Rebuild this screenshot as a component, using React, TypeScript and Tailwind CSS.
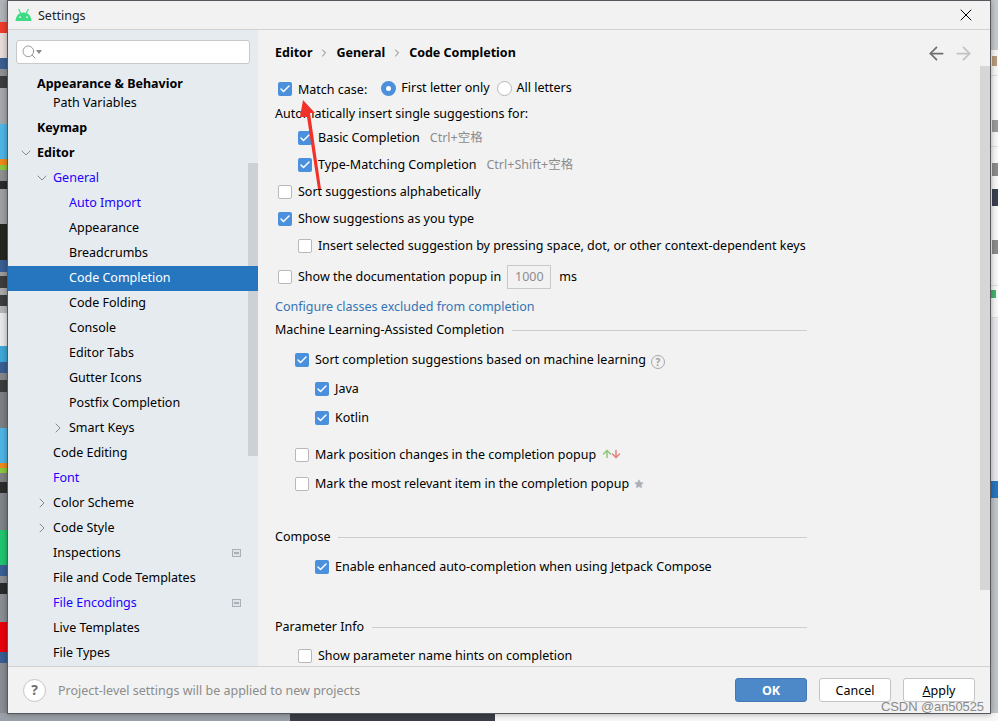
import { Check, ChevronDown, ChevronRight, X, ArrowLeft, ArrowRight, Search, Star, ArrowUp, ArrowDown } from 'lucide-react';
import type { ReactNode } from 'react';

const FONT = "font-['Noto_Sans','Noto_Sans_CJK_SC',sans-serif]";

function Box({ on }: { on?: boolean }) {
  return on ? (
    <span className="flex h-[14px] w-[14px] shrink-0 items-center justify-center rounded-[2px] bg-[#4a90dc]">
      <Check size={12} strokeWidth={3} className="text-white" />
    </span>
  ) : (
    <span className="h-[14px] w-[14px] shrink-0 rounded-[2px] border border-[#b8b8b8] bg-white" />
  );
}

function Check1({ on, x, mt, children }: { on?: boolean; x: string; mt: string; children: ReactNode }) {
  return (
    <div className={`flex h-5 items-center gap-[6px] ${x} ${mt}`}>
      <Box on={on} />
      <span className="whitespace-nowrap">{children}</span>
    </div>
  );
}

function Section({ title, mt }: { title: string; mt: string }) {
  return (
    <div className={`flex h-5 w-[532px] items-center gap-2 ${mt}`}>
      <span className="whitespace-nowrap">{title}</span>
      <span className="h-px flex-1 bg-[#cdcdcd]" />
    </div>
  );
}

type TreeRow = { label: string; pad: string; bold?: boolean; link?: boolean; sel?: boolean; open?: boolean; closed?: boolean; badge?: boolean; h?: string };

const tree: TreeRow[] = [
  { label: 'Appearance & Behavior', pad: 'pl-[29px]', bold: true, h: 'h-[19px]' },
  { label: 'Path Variables', pad: 'pl-[45px]', h: 'h-[19px]' },
  { label: 'Keymap', pad: 'pl-[29px]', bold: true, h: 'mt-[3px] h-[26px]' },
  { label: 'Editor', pad: 'pl-[29px]', bold: true, open: true },
  { label: 'General', pad: 'pl-[45px]', link: true, open: true },
  { label: 'Auto Import', pad: 'pl-[61px]', link: true },
  { label: 'Appearance', pad: 'pl-[61px]' },
  { label: 'Breadcrumbs', pad: 'pl-[61px]' },
  { label: 'Code Completion', pad: 'pl-[61px]', sel: true },
  { label: 'Code Folding', pad: 'pl-[61px]' },
  { label: 'Console', pad: 'pl-[61px]' },
  { label: 'Editor Tabs', pad: 'pl-[61px]' },
  { label: 'Gutter Icons', pad: 'pl-[61px]' },
  { label: 'Postfix Completion', pad: 'pl-[61px]' },
  { label: 'Smart Keys', pad: 'pl-[61px]', closed: true },
  { label: 'Code Editing', pad: 'pl-[45px]' },
  { label: 'Font', pad: 'pl-[45px]', link: true },
  { label: 'Color Scheme', pad: 'pl-[45px]', closed: true },
  { label: 'Code Style', pad: 'pl-[45px]', closed: true },
  { label: 'Inspections', pad: 'pl-[45px]', badge: true },
  { label: 'File and Code Templates', pad: 'pl-[45px]' },
  { label: 'File Encodings', pad: 'pl-[45px]', link: true, badge: true },
  { label: 'Live Templates', pad: 'pl-[45px]' },
  { label: 'File Types', pad: 'pl-[45px]' },
];

function Row({ r }: { r: TreeRow }) {
  const color = r.sel ? 'bg-[#2675bf] text-white' : r.link ? 'text-[#2200ff]' : 'text-black';
  return (
    <div className={`relative flex items-center ${r.h ?? 'h-[25px] pb-[2px]'} ${r.pad} ${color} ${r.bold ? 'font-bold' : ''}`}>
      {(r.open || r.closed) && (
        <span className={`-ml-[19px] mr-[3px] flex w-4 justify-center text-[#8a8a8a]`}>
          {r.open ? <ChevronDown size={16} strokeWidth={1.5} /> : <ChevronRight size={16} strokeWidth={1.5} />}
        </span>
      )}
      <span className="whitespace-nowrap">{r.label}</span>
      {r.badge && (
        <span className="absolute left-[224px] flex h-[8px] w-[9px] items-center justify-center border border-[#a9b0b7] bg-[#dfe3e7]">
          <span className="h-[2px] w-[5px] bg-[#a9b0b7]" />
        </span>
      )}
    </div>
  );
}

// strip of the desktop showing at the left of the dialog
const leftStrip: string[] = [
  'h-[22px] bg-[#b0b3b8]', 'h-[11px] bg-[#ee3b2c]', 'h-[25px] bg-[#e8dcd8]', 'h-[11px] bg-[#3a5f92]',
  'h-[7px] bg-[#8f9195]', 'h-[12px] bg-[#3d3d3d]', 'h-[36px] bg-[#a4a7ab]', 'h-[35px] bg-[#4eb5e6]',
  'h-[6px] bg-[#ef8a1a]', 'h-[5px] bg-[#8cc63f]', 'h-[11px] bg-[#8f8f8f]', 'h-[8px] bg-[#2a2a2a]',
  'h-[35px] bg-[#a0a0a0]', 'h-[36px] bg-[#24261f]', 'h-[12px] bg-[#3a5f92]', 'h-[4px] bg-[#9b9b9b]',
  'h-[12px] bg-[#3d3d3d]', 'h-[7px] bg-[#aaaaaa]', 'h-[11px] bg-[#3d3d3d]', 'h-[7px] bg-[#b5b5b5]',
  'h-[33px] bg-[#e8e8e8]', 'h-[16px] bg-[#3fa7d8]', 'h-[11px] bg-[#3a5f92]', 'h-[7px] bg-[#85888d]',
  'h-[12px] bg-[#3d3d3d]', 'h-[36px] bg-[#7c7f84]', 'h-[35px] bg-[#4eb5e6]', 'h-[5px] bg-[#ef8a1a]',
  'h-[5px] bg-[#8cc63f]', 'h-[9px] bg-[#808080]', 'h-[11px] bg-[#2c2c2c]', 'h-[37px] bg-[#80848a]',
  'h-[35px] bg-[#22c56f]', 'h-[11px] bg-[#3a5f92]', 'h-[7px] bg-[#8a8e94]', 'h-[11px] bg-[#2a2a2a]',
  'h-[28px] bg-[#8a8e94]', 'h-[30px] bg-[#e8000b]', 'h-[11px] bg-[#3a5f92]',
];

export default function App() {
  return (
    <div className={`relative h-[721px] w-[998px] overflow-hidden bg-[#8b9097] text-[12.5px] leading-5 text-black ${FONT}`}>
      {/* desktop behind the dialog */}
      <div className="absolute left-0 top-0 flex h-full w-[8px] flex-col bg-[#8a8e94]">
        {leftStrip.map((c, i) => (
          <div key={i} className={c} />
        ))}
      </div>
      <div className="absolute right-0 top-0 flex h-full w-[8px] flex-col overflow-hidden bg-[#f7f7f7]">
        <div className="h-[50px] shrink-0 bg-[#c5c8cc]" />
        <div className="h-[26px] shrink-0 border-b border-[#dddddd] pl-[2px] pt-[6px]">
          <span className="block h-[10px] w-[5px] bg-[#b59a7c]" />
        </div>
        <div className="h-[44px] shrink-0" />
        <div className="h-[27px] shrink-0 border-b border-[#dddddd] pl-[2px]">
          <span className="block h-[12px] w-[6px] bg-[#9a9a9a]" />
        </div>
        <div className="h-[42px] shrink-0 pl-[2px] pt-[16px]">
          <span className="block h-[13px] w-[6px] bg-[#8a8a8a]" />
        </div>
        <div className="h-[51px] shrink-0 pl-[2px]">
          <span className="block h-[17px] w-[6px] bg-[#3a4050]" />
        </div>
        <div className="h-[46px] shrink-0 border-b border-[#dddddd] pl-[2px]">
          <span className="block h-[14px] w-[6px] bg-[#8a8a8a]" />
        </div>
        <div className="flex h-[32px] shrink-0 items-start border-b border-[#dddddd] pl-[1px] pt-[4px]">
          <span className="h-[8px] w-[5px] bg-[#45b36b]" />
        </div>
        <div className="h-[163px] shrink-0 bg-[#e6e8eb]" />
        <div className="h-[17px] shrink-0 bg-[#2675bf]" />
        <div className="flex-1 bg-[#c0c4c8]" />
      </div>
      <div className="absolute bottom-0 left-0 flex h-[8px] w-full">
        <div className="w-[290px] bg-[#9aa0a7]" />
        <div className="w-[205px] bg-[#3a3d45]" />
        <div className="flex-1 bg-[#f7f7f7]" />
      </div>

      {/* dialog */}
      <div className="absolute left-[7px] top-0 flex h-[714px] w-[984px] flex-col border border-[#55585c] bg-[#f2f2f2] shadow-[0_0_6px_rgba(0,0,0,0.35)]">
        <div className="flex h-[29px] shrink-0 items-center border-b border-[#d1d1d1] pl-[7px] pr-[14px]">
          <svg width="17" height="13" viewBox="0 0 17 13" className="mb-[2px]">
            <path d="M0.5 13C0.8 8 4 4.6 8.5 4.6S16.2 8 16.5 13Z" fill="#3ddc84" />
            <path d="M3.6 1 L5.6 5 M13.4 1 L11.4 5" stroke="#3ddc84" strokeWidth="1.2" />
            <circle cx="5" cy="9.2" r="0.9" fill="#f2f2f2" />
            <circle cx="12" cy="9.2" r="0.9" fill="#f2f2f2" />
          </svg>
          <span className="ml-[6px] mt-[1px] text-[#222]">Settings</span>
          <X size={20} strokeWidth={1.2} className="ml-auto text-black" />
        </div>

        <div className="flex min-h-0 flex-1">
          <div className="relative w-[250px] shrink-0 overflow-hidden bg-[#e6ebf0]">
            <div className="absolute left-[240px] top-[133px] h-[293px] w-[10px] bg-[#cdd0d4]" />
            <div className="relative mx-2 mt-[10px] flex h-6 w-[234px] items-center rounded-[3px] border border-[#c9c9c9] bg-white pl-[4px] text-[#8a8a8a]">
              <Search size={16} strokeWidth={1.3} />
              <svg width="6" height="4" viewBox="0 0 6 4" className="-ml-[1px]">
                <path d="M0 0H6L3 4Z" fill="#8a8a8a" />
              </svg>
            </div>
            <div className="mt-[10px]">
              {tree.map(r => (
                <Row key={r.label} r={r} />
              ))}
            </div>
          </div>

          <div className="relative min-w-0 flex-1 overflow-hidden pl-[17px]">
            <div className="mt-[13px] flex h-5 items-center font-bold">
              <span>Editor</span>
              <ChevronRight size={12} strokeWidth={1.5} className="mx-[6px] text-[#555]" />
              <span>General</span>
              <ChevronRight size={12} strokeWidth={1.5} className="mx-[6px] text-[#555]" />
              <span>Code Completion</span>
              <ArrowLeft size={21} strokeWidth={2} className="ml-auto mr-[6px] text-[#6e6e6e]" />
              <ArrowRight size={21} strokeWidth={2} className="mr-[16px] text-[#c2c2c2]" />
            </div>

            <div className="ml-[3px] mt-4 flex h-5 items-center gap-[6px]">
              <Box on />
              <span className="mt-[2px]">Match case:</span>
              <span className="mb-[2px] ml-[8px] flex h-[15px] w-[15px] items-center justify-center rounded-full bg-[#4a90dc]">
                <span className="h-[5px] w-[5px] rounded-full bg-white" />
              </span>
              <span className="-ml-[1px] mb-[2px]">First letter only</span>
              <span className="mb-[2px] ml-[1px] h-[15px] w-[15px] rounded-full border border-[#b8b8b8] bg-white" />
              <span className="-ml-[1px] mb-[2px]">All letters</span>
            </div>
            <div className="mt-[5px] h-5">Automatically insert single suggestions for:</div>
            <Check1 on x="ml-[23px]" mt="mt-1">
              Basic Completion<span className="ml-[10px] text-[#8c8c8c]">Ctrl+空格</span>
            </Check1>
            <Check1 on x="ml-[23px]" mt="mt-[7px]">
              Type-Matching Completion<span className="ml-[10px] text-[#8c8c8c]">Ctrl+Shift+空格</span>
            </Check1>
            <Check1 x="ml-[3px]" mt="mt-[7px]">Sort suggestions alphabetically</Check1>
            <Check1 on x="ml-[3px]" mt="mt-[7px]">Show suggestions as you type</Check1>
            <Check1 x="ml-[23px]" mt="mt-[7px]">Insert selected suggestion by pressing space, dot, or other context-dependent keys</Check1>
            <div className="ml-[3px] mt-[11px] flex h-5 items-center gap-[6px]">
              <Box />
              <span>Show the documentation popup in</span>
              <span className="flex h-6 w-11 items-center justify-center border border-[#c9c9c9] text-[#8c8c8c]">1000</span>
              <span className="ml-[2px]">ms</span>
            </div>
            <div className="mt-[10px] h-5 text-[#3574b4]">Configure classes excluded from completion</div>
            <Section title="Machine Learning-Assisted Completion" mt="mt-[3px]" />
            <Check1 on x="ml-5" mt="mt-[10px]">
              Sort completion suggestions based on machine learning
              <span className="ml-[5px] inline-flex h-[14px] w-[14px] items-center justify-center rounded-full border border-[#a8a8a8] align-[-2px] text-[10px] font-bold text-[#a0a0a0]">?</span>
            </Check1>
            <Check1 on x="ml-10" mt="mt-[9px]">Java</Check1>
            <Check1 on x="ml-10" mt="mt-[9px]">Kotlin</Check1>
            <Check1 x="ml-5" mt="mt-[17px]">
              Mark position changes in the completion popup
              <ArrowUp size={12} strokeWidth={3} className="ml-[5px] inline align-[-1px] text-[#8cc57a]" />
              <ArrowDown size={12} strokeWidth={3} className="-ml-[3px] inline align-[-1px] text-[#e27f7f]" />
            </Check1>
            <Check1 x="ml-5" mt="mt-[9px]">
              Mark the most relevant item in the completion popup
              <Star size={10} fill="#a9b0b7" strokeWidth={1} className="ml-[5px] inline align-[-1px] text-[#a9b0b7]" />
            </Check1>
            <Section title="Compose" mt="mt-[33px]" />
            <Check1 on x="ml-10" mt="mt-[10px]">Enable enhanced auto-completion when using Jetpack Compose</Check1>
            <Section title="Parameter Info" mt="mt-10" />
            <Check1 x="ml-[23px]" mt="mt-[9px]">Show parameter name hints on completion</Check1>

            <div className="absolute right-0 top-[36px] h-[524px] w-[10px] bg-[#d6d6d6]" />
          </div>
        </div>

        <div className="flex h-[47px] shrink-0 items-center border-t border-[#d1d1d1] px-[15px]">
          <span className="flex h-[23px] w-[23px] items-center justify-center rounded-full border border-[#c4c4c4] bg-white text-[14px] font-bold text-[#6e6e6e]">?</span>
          <span className="ml-[12px] mt-[2px] text-[#8c8c8c]">Project-level settings will be applied to new projects</span>
          <button className="ml-auto h-6 w-[72px] rounded-[3px] border border-[#4279b4] bg-[#4d89c9] pt-[1px] font-bold text-white">OK</button>
          <button className="ml-3 h-6 w-[72px] rounded-[3px] border border-[#c4c4c4] bg-white pt-[1px]">Cancel</button>
          <button className="ml-3 h-6 w-[72px] rounded-[3px] border border-[#c4c4c4] bg-white pt-[1px]"><span className="underline">A</span>pply</button>
        </div>
      </div>

      {/* red arrow annotation */}
      <svg className="pointer-events-none absolute left-0 top-0" width="998" height="721">
        <polygon points="303,100 315,113 310,113 321,189 318,189 307,117 300,117" fill="#f0322a" />
      </svg>

      <span className="absolute left-[881px] top-[697px] font-['Liberation_Sans',sans-serif] text-[13px] tracking-[-0.1px] text-[#8a8a8a]">CSDN @an50525</span>
    </div>
  );
}
